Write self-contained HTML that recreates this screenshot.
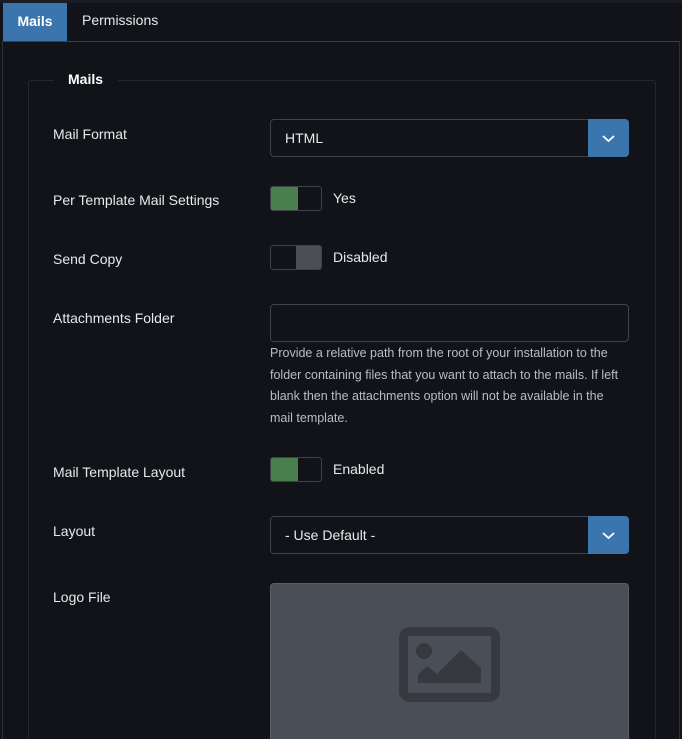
<!DOCTYPE html>
<html style="width:682px;height:739px;overflow:hidden"><head><meta charset="utf-8"><style>
*{box-sizing:border-box;margin:0;padding:0}
body{width:682px;height:739px;background:#111318;font-family:"Liberation Sans",sans-serif;color:#e8e9eb;position:relative;overflow:hidden;font-size:14px}
.a{position:absolute}
.lbl{position:absolute;left:53px;font-size:14px;color:#e8e9eb}
.sel{position:absolute;left:270px;width:359px;height:38px;border:1px solid #3e424a;border-radius:4px;background:#111318}
.sel span{position:absolute;left:14px;top:10px;font-size:14px;color:#e8e9eb}
.sel .btn{position:absolute;right:-1px;top:-1px;width:41px;height:38px;background:#3a75ad;border-radius:0 4px 4px 0}
.tg{position:absolute;left:270px;width:52px;height:25px;border:1px solid #3e424a;border-radius:3px;overflow:hidden}
.tgl{position:absolute;left:333px;font-size:14px;color:#e8e9eb}
</style></head><body>
<div class="a" style="left:0;top:0;width:682px;height:3px;background:#1a1d23"></div>
<div class="a" style="left:2px;top:41px;width:678px;height:698px;border-left:1px solid #2c3038;border-right:1px solid #2c3038;border-top:1px solid #3a3e46"></div>
<div class="a" style="left:3px;top:3px;width:64px;height:38px;background:#3a75ad;color:#fff;font-weight:bold;font-size:14px;line-height:36px;text-align:center">Mails</div>
<div class="a" style="left:82px;top:12px;font-size:14px;color:#e8e9eb">Permissions</div>
<div class="a" style="left:28px;top:80px;width:628px;height:670px;border:1px solid #24272e;border-radius:3px"></div>
<div class="a" style="left:54px;top:72px;width:64px;height:16px;background:#111318"></div>
<div class="a" style="left:68px;top:71px;font-weight:bold;font-size:14px;color:#fff">Mails</div>

<div class="lbl" style="top:126px">Mail Format</div>
<div class="sel" style="top:119px"><span>HTML</span><div class="btn"><svg width="41" height="38"><path d="M15 17l5.5 5 5.5-5" stroke="#fff" stroke-width="1.8" fill="none"/></svg></div></div>

<div class="lbl" style="top:192px">Per Template Mail Settings</div>
<div class="tg" style="top:186px"><div class="a" style="left:0;top:0;width:27px;height:25px;background:#4a7e4e"></div></div>
<div class="tgl" style="top:190px">Yes</div>

<div class="lbl" style="top:251px">Send Copy</div>
<div class="tg" style="top:245px"><div class="a" style="left:25px;top:0;width:27px;height:25px;background:#4b4e55"></div></div>
<div class="tgl" style="top:249px">Disabled</div>

<div class="lbl" style="top:310px">Attachments Folder</div>
<div class="a" style="left:270px;top:304px;width:359px;height:38px;border:1px solid #3e424a;border-radius:4px"></div>
<div class="a" style="left:270px;top:343px;width:362px;font-size:12.5px;line-height:21.7px;color:#b9bdc5">Provide a relative path from the root of your installation to the folder containing files that you want to attach to the mails. If left blank then the attachments option will not be available in the<br>mail template.</div>

<div class="lbl" style="top:464px">Mail Template Layout</div>
<div class="tg" style="top:457px"><div class="a" style="left:0;top:0;width:27px;height:25px;background:#4a7e4e"></div></div>
<div class="tgl" style="top:461px">Enabled</div>

<div class="lbl" style="top:523px">Layout</div>
<div class="sel" style="top:516px"><span>- Use Default -</span><div class="btn"><svg width="41" height="38"><path d="M15 17l5.5 5 5.5-5" stroke="#fff" stroke-width="1.8" fill="none"/></svg></div></div>

<div class="lbl" style="top:589px">Logo File</div>
<div class="a" style="left:270px;top:583px;width:359px;height:170px;background:#4a4e56;border:1px solid #5a5e66;border-radius:4px"></div>
<svg class="a" style="left:0;top:0" width="682" height="739">
<rect x="403.5" y="631.5" width="92" height="66" rx="6" fill="none" stroke="#363940" stroke-width="9"/>
<circle cx="424" cy="651" r="8" fill="#363940"/>
<polygon points="418,683 418,675 427,666 437,674 461,650 481,668 481,683" fill="#363940"/>
</svg>
</body></html>
